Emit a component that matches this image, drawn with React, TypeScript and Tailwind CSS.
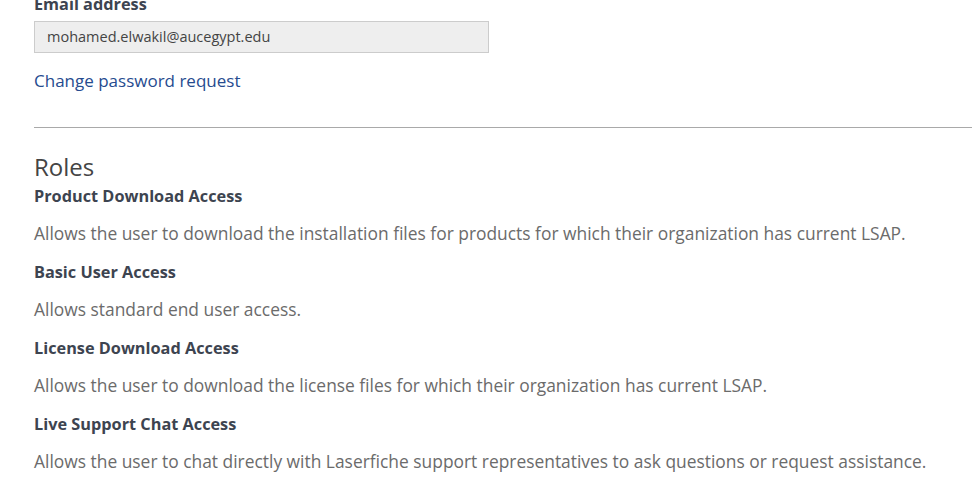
const roles = [
  {
    name: 'Product Download Access',
    desc: 'Allows the user to download the installation files for products for which their organization has current LSAP.',
  },
  { name: 'Basic User Access', desc: 'Allows standard end user access.' },
  {
    name: 'License Download Access',
    desc: 'Allows the user to download the license files for which their organization has current LSAP.',
  },
  {
    name: 'Live Support Chat Access',
    desc: 'Allows the user to chat directly with Laserfiche support representatives to ask questions or request assistance.',
  },
];

export default function App() {
  return (
    <div className="h-[484px] w-[972px] overflow-hidden bg-white font-['Open_Sans',sans-serif] text-[#444]">
      <div className="-mt-[6px] pl-[34px]">
        {/* Account info */}
        <div className="text-[16.3px] font-bold leading-[20px] text-[#3d4450]">Email address</div>
        <div className="mt-[7px] flex h-[32px] w-[455px] items-center border border-[#ccc] bg-[#eee] px-[12px] text-[14.5px] text-[#444]">
          mohamed.elwakil@aucegypt.edu
        </div>
        <a href="#" className="mt-[16px] block text-[17px] leading-[24px] text-[#264b8f]">
          Change password request
        </a>

        <hr className="mt-[34px] border-t border-[#a9a9a9]" />

        {/* Roles */}
        <h2 className="mt-[24px] text-[24px] leading-[30px] text-[#444]">Roles</h2>
        <div className="mt-[3px]">
          {roles.map(r => (
            <div key={r.name}>
              <div className="text-[16.3px] font-bold leading-[22px] text-[#3d4450]">{r.name}</div>
              <p className="mt-[15px] mb-[17px] text-[17.4px] leading-[22px] text-[#6b6b6b]">{r.desc}</p>
            </div>
          ))}
        </div>
      </div>
    </div>
  );
}
